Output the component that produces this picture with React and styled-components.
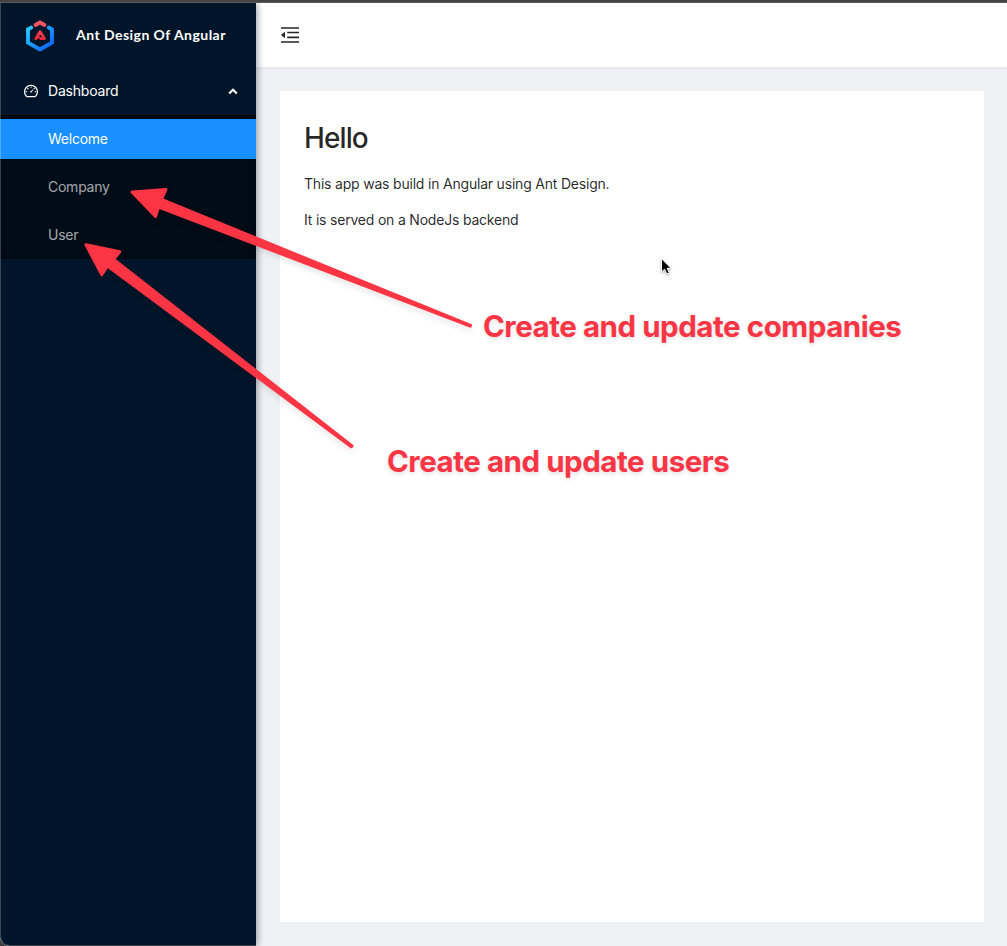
import React from 'react';
import styled, { createGlobalStyle } from 'styled-components';
import { AiOutlineDashboard } from 'react-icons/ai';

const GlobalStyle = createGlobalStyle`
  *, *::before, *::after { box-sizing: border-box; }
  html, body, #root { height: 100%; margin: 0; }
  body {
    overflow: hidden;
    font-family: Inter, 'Liberation Sans', sans-serif;
    font-size: 14px;
    line-height: 22px;
    color: rgba(0, 0, 0, 0.85);
    background: #3c3a3b;
  }
`;

const Window = styled.div`
  position: relative;
  display: flex;
  flex-direction: column;
  height: 100vh;
`;

const TopEdge = styled.div`
  flex: none;
  height: 3px;
  background: #454344;
  border-bottom: 1px solid #5a5859;
`;

const Layout = styled.div`
  flex: 1;
  display: flex;
  min-height: 0;
  background: #eff1f5;
  border-bottom-left-radius: 9px;
  overflow: hidden;
`;

const Sider = styled.aside`
  position: relative;
  z-index: 10;
  flex: none;
  width: 256px;
  background: #001529;
  border-bottom: 1px solid #35404b;
  border-bottom-left-radius: 9px;
  box-shadow: 2px 0 6px rgba(0, 21, 41, 0.35);

  &::after {
    content: '';
    position: absolute;
    inset: 0;
    border-left: 1px solid rgba(255, 255, 255, 0.22);
    border-bottom-left-radius: 9px;
    pointer-events: none;
  }
`;

const Brand = styled.div`
  display: flex;
  align-items: center;
  height: 64px;
  padding: 1px 0 0 24px;
`;

const BrandName = styled.h1`
  margin: 0 0 2px 20px;
  color: #fff;
  font: 700 14px/20px Lato, sans-serif;
  letter-spacing: 0.46px;
  white-space: nowrap;
`;

const MenuTitle = styled.div`
  display: flex;
  align-items: center;
  height: 40px;
  margin: 4px 0;
  padding: 0 18px 0 23px;
  color: #fff;
  letter-spacing: -0.2px;

  > svg:first-child { margin-right: 9px; }
  > svg:last-child { margin-left: auto; }
`;

const SubMenu = styled.ul`
  display: flex;
  flex-direction: column;
  gap: 8px;
  margin: 0;
  padding: 4px 0;
  list-style: none;
  background: #000c17;
  box-shadow: inset 0 2px 8px rgba(0, 0, 0, 0.45);
`;

const MenuItem = styled.li`
  height: 40px;
  padding-left: 48px;
  line-height: 40px;
  letter-spacing: -0.25px;
  color: ${(p) => (p.$active ? '#fff' : 'rgba(255, 255, 255, 0.65)')};
  background: ${(p) => (p.$active ? '#1890ff' : 'transparent')};
`;

const Main = styled.div`
  flex: 1;
  display: flex;
  flex-direction: column;
  min-width: 0;
`;

const Header = styled.header`
  position: relative;
  flex: none;
  display: flex;
  align-items: center;
  height: 64px;
  padding-left: 24px;
  background: #fff;
  box-shadow: 0 1px 4px rgba(0, 21, 41, 0.08);
`;

const Card = styled.main`
  flex: 1;
  margin: 24px 23px 24px 24px;
  padding: 24px;
  background: #fff;
`;

const Heading = styled.h1`
  margin: 4px 0 16px;
  font-size: 28px;
  font-weight: 500;
  line-height: 38px;
  letter-spacing: -0.9px;
`;

const Paragraph = styled.p`
  margin: 0 0 14px;
  letter-spacing: -0.2px;
`;

const Annotations = styled.div`
  position: absolute;
  inset: 0;
  z-index: 20;
  pointer-events: none;
`;

const Arrows = styled.svg`
  position: absolute;
  inset: 0;
  filter: drop-shadow(0 3px 3px rgba(0, 0, 0, 0.11));
`;

const Note = styled.div`
  position: absolute;
  left: ${(p) => p.$x}px;
  top: ${(p) => p.$y}px;
  color: #fb3544;
  font-size: 29.5px;
  font-weight: 700;
  line-height: 36px;
  letter-spacing: -0.46px;
  white-space: nowrap;
  text-shadow: 0 2px 4px rgba(0, 0, 0, 0.13);
`;

const Pointer = styled.svg`
  position: absolute;
  left: 660px;
  top: 257px;
  filter: drop-shadow(0 1px 1px rgba(0, 0, 0, 0.35));
`;

const Logo = () => (
  <svg width="32" height="32" viewBox="0 0 32 32" fill="none">
    <defs>
      <linearGradient id="hex" x1="4" y1="6" x2="26" y2="30" gradientUnits="userSpaceOnUse">
        <stop stopColor="#29cdff" />
        <stop offset="0.5" stopColor="#1a9bff" />
        <stop offset="1" stopColor="#0a60ff" />
      </linearGradient>
      <linearGradient id="roof" x1="16" y1="0" x2="16" y2="22" gradientUnits="userSpaceOnUse">
        <stop stopColor="#f4606a" />
        <stop offset="0.4" stopColor="#f0485a" />
        <stop offset="1" stopColor="#f51d2c" />
      </linearGradient>
    </defs>
    <path d="M7.2 7.6 L4 9.4 V22.6 L16 29.4 L28 22.6 V9.4 L24.8 7.6" stroke="url(#hex)" strokeWidth="3.9" strokeLinecap="round" />
    <path d="M11.6 5 L16 2.4 L20.4 5" stroke="url(#roof)" strokeWidth="3.9" strokeLinecap="round" />
    <path d="M14.4 16.8 L11.8 18.6 L16 11.6 L20.4 18.6 H16.6" stroke="url(#roof)" strokeWidth="2.8" strokeLinejoin="round" strokeLinecap="round" />
  </svg>
);

const Caret = () => (
  <svg width="10" height="8" viewBox="0 0 10 8" fill="none">
    <path d="M1.2 6.5 L5 2.7 L8.8 6.5" stroke="#fff" strokeWidth="2.1" />
  </svg>
);

const FoldIcon = () => (
  <svg width="20" height="18" viewBox="0 0 20 18" fill="#262626">
    <path d="M1 1.2 H19 V2.8 H1 Z M1 15.2 H19 V16.8 H1 Z M7.2 5.7 H19 V7.3 H7.2 Z M7.2 10.6 H19 V12.2 H7.2 Z M1 9 L5 5.8 V12.2 Z" />
  </svg>
);

const MENU = ['Welcome', 'Company', 'User'];

export default function App() {
  return (
    <>
      <GlobalStyle />
      <Window>
        <TopEdge />
        <Layout>
          <Sider>
            <Brand>
              <Logo />
              <BrandName>Ant Design Of Angular</BrandName>
            </Brand>
            <MenuTitle>
              <AiOutlineDashboard size={16} />
              <span>Dashboard</span>
              <Caret />
            </MenuTitle>
            <SubMenu>
              {MENU.map((label, i) => (
                <MenuItem key={label} $active={i === 0}>{label}</MenuItem>
              ))}
            </SubMenu>
          </Sider>
          <Main>
            <Header>
              <FoldIcon />
            </Header>
            <Card>
              <Heading>Hello</Heading>
              <Paragraph>This app was build in Angular using Ant Design.</Paragraph>
              <Paragraph>It is served on a NodeJs backend</Paragraph>
            </Card>
          </Main>
        </Layout>
        <Annotations>
          <Arrows width="1007" height="946" fill="#fb3544" stroke="#fb3544" strokeWidth="3" strokeLinejoin="round">
            <path d="M132 192 L166 189.5 L161.5 199.5 L470.5 325.5 L470.2 326.2 L158.5 207 L155.5 216.5 Z" />
            <path d="M86 244.8 L119.8 251.8 L113.5 259.3 L352 446 L351.3 446.8 L107.5 266 L101.8 274.8 Z" />
          </Arrows>
          <Note $x={483} $y={308}>Create and update companies</Note>
          <Note $x={387} $y={443}>Create and update users</Note>
          <Pointer width="14" height="20" viewBox="0 0 14 20">
            <path d="M1.5 1.5 V15 L4.6 12.2 L6.8 17 L9.3 16 L7.2 11.3 H11 Z" fill="#000" stroke="#fff" strokeWidth="1" />
          </Pointer>
        </Annotations>
      </Window>
    </>
  );
}
